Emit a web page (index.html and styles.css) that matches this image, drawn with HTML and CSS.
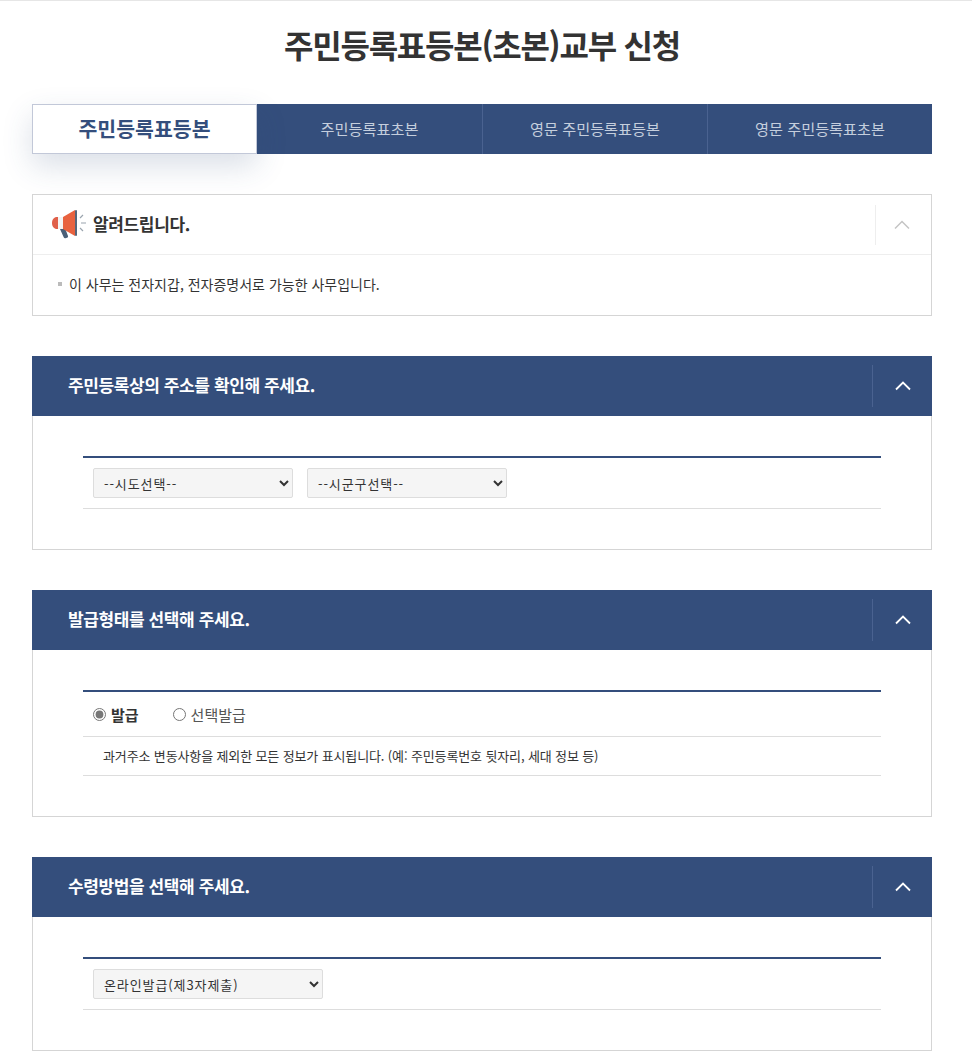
FILE: index.html
```html
<!DOCTYPE html>
<html lang="ko">
<head>
    <meta charset="UTF-8">
    <meta name="viewport" content="width=device-width, initial-scale=1.0">
    <title>주민등록표등본(초본)교부 신청</title>
    <link rel="stylesheet" href="styles.css">
</head>
<body>
    <div class="page">
        <h1>주민등록표등본(초본)교부 신청</h1>

        <!-- 탭 -->
        <ul class="tabs">
            <li class="tab active">주민등록표등본</li>
            <li class="tab">주민등록표초본</li>
            <li class="tab">영문 주민등록표등본</li>
            <li class="tab">영문 주민등록표초본</li>
        </ul>

        <!-- 알림 -->
        <section class="notice">
            <div class="notice-head">
                <svg class="notice-icon" viewBox="0 0 34 30" width="34" height="30" aria-hidden="true">
                    <path d="M8 19l5-1 3 8c.3 1-.3 1.600-1 1.800l-1.500.4c-.8.2-1.500-.2-1.800-1z" fill="#4a5f78"/>
                    <path d="M5 7h1v12H5c-3 0-5-2.500-5-6s2-6 5-6z" fill="#e0604a"/>
                    <rect x="6" y="7" width="5" height="12" fill="#f4f4f4"/>
                    <path d="M11 7l12-7v26l-12-7z" fill="#e8623f"/>
                    <rect x="23" y="0" width="2" height="26" rx="1" fill="#56667a"/>
                    <path d="M28 8l3-3M29 13h5M28 18l3 3" stroke="#9aa4ae" stroke-width="1.200" fill="none"/>
                </svg>
                <h2>알려드립니다.</h2>
                <button class="toggle" type="button" aria-label="접기">
                    <svg viewBox="0 0 16 10" width="16" height="10"><path d="M1 8.500l7-7 7 7" fill="none" stroke="#c4c4c4" stroke-width="1.500"/></svg>
                </button>
            </div>
            <p class="notice-body">이 사무는 전자지갑, 전자증명서로 가능한 사무입니다.</p>
        </section>

        <!-- 주소 -->
        <section class="panel">
            <div class="panel-head">
                <h2>주민등록상의 주소를 확인해 주세요.</h2>
                <button class="toggle" type="button" aria-label="접기">
                    <svg viewBox="0 0 16 10" width="16" height="10"><path d="M1 8.500l7-7 7 7" fill="none" stroke="#fff" stroke-width="1.800"/></svg>
                </button>
            </div>
            <div class="panel-body">
                <div class="form-row">
                    <select class="select"><option>--시도선택--</option></select>
                    <select class="select"><option>--시군구선택--</option></select>
                </div>
            </div>
        </section>

        <!-- 발급형태 -->
        <section class="panel">
            <div class="panel-head">
                <h2>발급형태를 선택해 주세요.</h2>
                <button class="toggle" type="button" aria-label="접기">
                    <svg viewBox="0 0 16 10" width="16" height="10"><path d="M1 8.500l7-7 7 7" fill="none" stroke="#fff" stroke-width="1.800"/></svg>
                </button>
            </div>
            <div class="panel-body">
                <div class="radio-row">
                    <label class="radio checked"><input type="radio" name="kind" checked>발급</label>
                    <label class="radio"><input type="radio" name="kind">선택발급</label>
                </div>
                <p class="radio-help">과거주소 변동사항을 제외한 모든 정보가 표시됩니다. (예: 주민등록번호 뒷자리, 세대 정보 등)</p>
            </div>
        </section>

        <!-- 수령방법 -->
        <section class="panel">
            <div class="panel-head">
                <h2>수령방법을 선택해 주세요.</h2>
                <button class="toggle" type="button" aria-label="접기">
                    <svg viewBox="0 0 16 10" width="16" height="10"><path d="M1 8.500l7-7 7 7" fill="none" stroke="#fff" stroke-width="1.800"/></svg>
                </button>
            </div>
            <div class="panel-body">
                <div class="form-row">
                    <select class="select select-wide"><option>온라인발급(제3자제출)</option></select>
                </div>
            </div>
        </section>
    </div>
</body>
</html>
```

FILE: styles.css
```css
/* 기본 */
* {
    margin: 0;
    padding: 0;
    box-sizing: border-box;
}

body {
    font-family: "Noto Sans CJK KR", "Noto Sans", sans-serif;
    background: #fff;
    color: #333;
    font-size: 14px;
    overflow: hidden;
}

.page {
    border-top: 1px solid #e6e6e6;
    padding: 0 40px 0 32px;
}

h1 {
    font-size: 32px;
    font-weight: 700;
    line-height: 44px;
    letter-spacing: -1.25px;
    text-align: center;
    color: #333;
    margin-top: 21px;
    margin-bottom: 38px;
}

/* 탭 */
.tabs {
    display: flex;
    list-style: none;
    height: 50px;
    margin-bottom: 40px;
    background: #344e7c;
}

.tab {
    flex: 0 0 25%;
    display: flex;
    align-items: center;
    justify-content: center;
    padding-bottom: 3px;
    color: #c5cedd;
    font-size: 15.2px;
    border-left: 1px solid #4a6290;
}

.tab.active {
    background: #fff;
    color: #344e7c;
    font-size: 20.500px;
    font-weight: 700;
    border: 1px solid #c2c8d8;
    box-shadow: 0 12px 30px rgba(52, 78, 124, 0.18);
}

.tab.active + .tab {
    border-left: 0;
}

/* 알림 */
.notice {
    border: 1px solid #d5d5d5;
    margin-bottom: 40px;
}

.notice-head {
    display: flex;
    align-items: center;
    height: 60px;
    padding-left: 19px;
    border-bottom: 1px solid #eee;
}

.notice-icon {
    margin-right: 7px;
}

.notice-head h2 {
    font-size: 17px;
    font-weight: 700;
    letter-spacing: -0.35px;
    padding-bottom: 2px;
    color: #333;
    flex: 1;
}

.toggle {
    width: 56px;
    height: 40px;
    display: flex;
    align-items: center;
    justify-content: center;
    background: none;
    border: 0;
    border-left: 1px solid #eee;
}

.notice .toggle {
    padding-right: 4px;
}

.notice-body {
    height: 60px;
    line-height: 58px;
    padding-left: 36px;
    position: relative;
}

.notice-body::before {
    content: "";
    position: absolute;
    left: 25px;
    top: 27px;
    width: 4px;
    height: 4px;
    background: #bbb;
}

/* 패널 */
.panel {
    margin-bottom: 40px;
}

.panel-head {
    display: flex;
    align-items: center;
    height: 60px;
    padding-left: 36px;
    background: #344e7c;
}

.panel-head h2 {
    flex: 1;
    font-size: 17px;
    font-weight: 700;
    letter-spacing: -0.39px;
    padding-bottom: 3px;
    color: #fff;
}

.panel-head .toggle {
    width: 60px;
    height: 42px;
    padding-bottom: 1px;
    border-left-color: #4a6290;
}

.panel-body {
    border: 1px solid #d5d5d5;
    border-top: 0;
    padding: 40px 50px;
}

.form-row {
    display: flex;
    gap: 14px;
    height: 53px;
    padding: 10px 10px 0;
    border-top: 2px solid #344e7c;
    border-bottom: 1px solid #ddd;
}

.select {
    width: 200px;
    height: 30px;
    padding-left: 6px;
    font-family: inherit;
    font-size: 13px;
    letter-spacing: 0.9px;
    color: #333;
    background: #f5f5f5;
    border: 1px solid #ddd;
    border-radius: 2px;
}

.select-wide {
    width: 230px;
}

/* 라디오 */
.radio-row {
    display: flex;
    gap: 34px;
    height: 47px;
    align-items: center;
    padding-left: 10px;
    border-top: 2px solid #344e7c;
    border-bottom: 1px solid #ddd;
    font-size: 15px;
    color: #555;
}

.radio {
    display: flex;
    align-items: center;
    gap: 5px;
}

.radio.checked {
    font-weight: 700;
    color: #333;
}

.radio input {
    width: 13px;
    height: 13px;
    accent-color: #777;
}

.radio-help {
    height: 39px;
    line-height: 38px;
    padding-left: 20px;
    font-size: 13px;
    letter-spacing: -0.13px;
    border-bottom: 1px solid #ddd;
}
```
